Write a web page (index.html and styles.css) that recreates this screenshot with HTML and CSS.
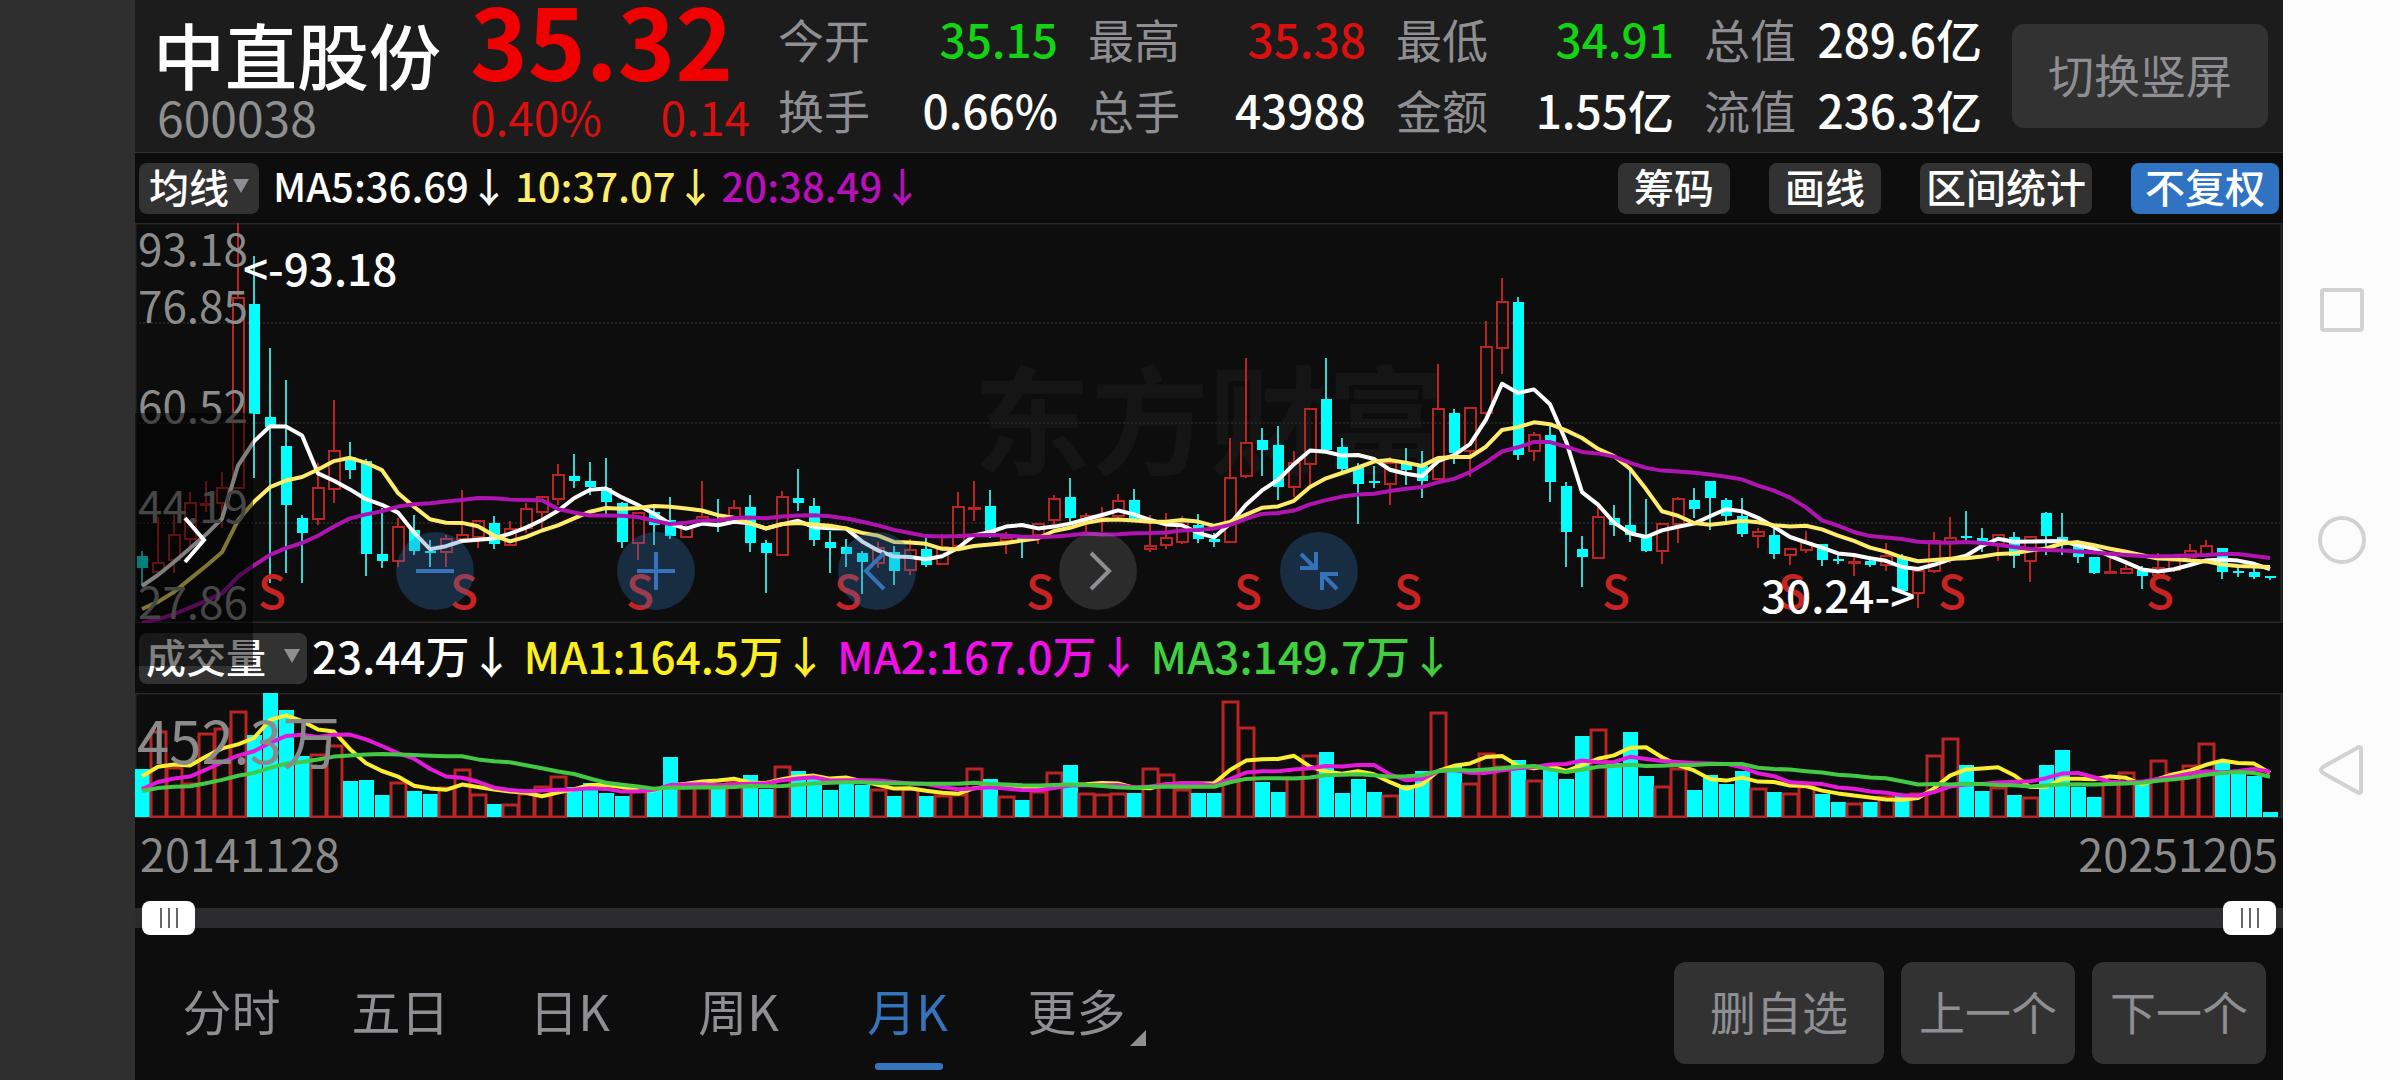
FILE: index.html
```
<!DOCTYPE html>
<html lang="zh-CN">
<head>
    <meta charset="UTF-8">
    <meta name="viewport" content="width=device-width, initial-scale=1.0">
    <title>中直股份 600038</title>
    <link rel="stylesheet" href="styles.css">
</head>
<body>
    <div class="gutter"></div>

    <main class="app">
        <header class="quote">
            <div class="stock">
                <h1>中直股份</h1>
                <span class="code">600038</span>
            </div>
            <div class="price up">
                <strong>35.32</strong>
                <div class="change"><span>0.40%</span><span>0.14</span></div>
            </div>
            <dl class="stats">
                <div><dt>今开</dt><dd class="down">35.15</dd></div>
                <div><dt>最高</dt><dd class="up">35.38</dd></div>
                <div><dt>最低</dt><dd class="down">34.91</dd></div>
                <div><dt>总值</dt><dd>289.6亿</dd></div>
                <div><dt>换手</dt><dd>0.66%</dd></div>
                <div><dt>总手</dt><dd>43988</dd></div>
                <div><dt>金额</dt><dd>1.55亿</dd></div>
                <div><dt>流值</dt><dd>236.3亿</dd></div>
            </dl>
            <button type="button" class="big-btn rotate">切换竖屏</button>
        </header>

        <div class="toolbar">
            <button type="button" class="chip picker">均线<i class="caret"></i></button>
            <div class="legend">
                <span>MA5:36.69↓</span>
                <span class="ma10">10:37.07↓</span>
                <span class="ma20">20:38.49↓</span>
            </div>
            <div class="tools">
                <button type="button" class="chip">筹码</button>
                <button type="button" class="chip">画线</button>
                <button type="button" class="chip wide">区间统计</button>
                <button type="button" class="chip active">不复权</button>
            </div>
        </div>

        <section class="chart">
            <svg class="plot" id="kline" viewBox="0 223 2148 400">
                <text class="watermark" x="1074" y="466">东方财富</text>
                <g class="frame">
                    <path d="M0 223.5H2148M0 622.5H2148M0.5 223V623M2146.5 223V623"/>
                    <path class="dots" d="M0 323H2148M0 423H2148M0 523H2148"/>
                </g>
                <g id="candles"></g>
                <g id="priceLines"></g>
                <g id="marks" class="marks"></g>
                <g class="scale">
                    <text x="3" y="266">93.18</text>
                    <text x="3" y="323">76.85</text>
                    <text x="3" y="423">60.52</text>
                    <text x="3" y="523">44.19</text>
                    <text x="3" y="619">27.86</text>
                </g>
                <g class="callout">
                    <text x="108" y="286">&lt;-93.18</text>
                    <text x="1626" y="613">30.24-&gt;</text>
                </g>
            </svg>
            <div class="controls">
                <button type="button" class="round" aria-label="缩小"><svg viewBox="0 0 78 78"><path d="M20 39H58"/></svg></button>
                <button type="button" class="round" aria-label="放大"><svg viewBox="0 0 78 78"><path d="M20 39H58M39 20V58"/></svg></button>
                <button type="button" class="round" aria-label="左移"><svg viewBox="0 0 78 78"><path d="M46 21L28 39L46 57"/></svg></button>
                <button type="button" class="round off" aria-label="右移"><svg viewBox="0 0 78 78"><path d="M32 21L50 39L32 57"/></svg></button>
                <button type="button" class="round" aria-label="还原"><svg viewBox="0 0 78 78"><path d="M21 22L35 36M20 36H36V20M57 57L43 43M58 42H42V58"/></svg></button>
            </div>
            <button type="button" class="drawer" aria-label="展开"><svg viewBox="0 0 118 253"><path d="M50 105L69 127L50 149"/></svg></button>
        </section>

        <div class="toolbar volume-bar">
            <button type="button" class="chip picker volume">成交量<i class="caret"></i></button>
            <div class="legend">
                <span>23.44万↓</span>
                <span class="v1">MA1:164.5万↓</span>
                <span class="v2">MA2:167.0万↓</span>
                <span class="v3">MA3:149.7万↓</span>
            </div>
        </div>

        <svg class="plot" viewBox="0 0 2148 125">
            <path class="frame" d="M0 .5H2148M0 124.5H2148M.5 0V125M2146.5 0V125"/>
            <g id="bars"></g>
            <g id="volumeLines"></g>
            <text class="max" x="2" y="71">452.3万</text>
        </svg>

        <div class="dates"><span>20141128</span><span>20251205</span></div>

        <div class="range">
            <input type="range" min="0" max="100" value="0" aria-label="开始日期">
            <input type="range" min="0" max="100" value="100" aria-label="结束日期">
        </div>

        <footer class="bottom">
            <nav class="tabs">
                <a href="#">分时</a>
                <a href="#">五日</a>
                <a href="#">日K</a>
                <a href="#">周K</a>
                <a href="#" class="current">月K</a>
                <a href="#" class="more">更多</a>
            </nav>
            <div class="actions">
                <button type="button" class="big-btn remove">删自选</button>
                <button type="button" class="big-btn">上一个</button>
                <button type="button" class="big-btn">下一个</button>
            </div>
        </footer>
    </main>

    <nav class="system">
        <svg viewBox="0 0 50 50"><rect x="5" y="5" width="40" height="40" rx="2"/></svg>
        <svg viewBox="0 0 50 50"><circle cx="25" cy="25" r="22"/></svg>
        <svg viewBox="0 0 50 50"><path d="M44 3V47Q43 49 40 47L6 28Q2 25 6 22L40 3Q43 1 44 3Z"/></svg>
    </nav>

    <script src="chart.js"></script>
</body>
</html>
```
FILE: styles.css
```
* {
    box-sizing: border-box;
}
body {
    margin: 0;
    display: flex;
    min-height: 100vh;
    background: #0d0d0d;
    color: #fff;
    font-family: "Noto Sans CJK SC", sans-serif;
}
button {
    border: none;
    font-family: inherit;
    cursor: pointer;
}
.gutter {
    flex: 0 0 135px;
    background: #2f2f2f;
}
.app {
    flex: 1;
    min-width: 0;
    display: flex;
    flex-direction: column;
}
.up {
    color: #dc0f0f;
}
.down {
    color: #14d214;
}

/* quote header */
.quote {
    display: flex;
    height: 153px;
    padding: 0 15px 0 18px;
    background: #1c1c1c;
    border-bottom: 1px solid #333;
}
.stock {
    width: 317px;
    padding-top: 13px;
}
.stock h1 {
    margin: 0;
    font-size: 72px;
    line-height: 80px;
    font-weight: 500;
}
.code {
    display: block;
    padding-left: 4px;
    font-size: 48px;
    line-height: 46px;
    color: #8f8f8f;
}
.price {
    width: 280px;
}
.price strong {
    display: block;
    height: 94px;
    font-size: 98px;
    line-height: 76px;
    font-weight: 700;
    color: #f00000;
}
.change {
    display: flex;
    justify-content: space-between;
    font-size: 46px;
    line-height: 44px;
}
.stats {
    flex: 1;
    display: grid;
    grid-template-columns: 280px 278px 278px 1fr;
    column-gap: 30px;
    grid-auto-rows: 71px;
    margin: 0 30px 0 28px;
    padding-top: 3px;
    font-size: 46px;
    line-height: 71px;
}
.stats div {
    display: flex;
    justify-content: space-between;
}
.stats dt {
    color: #8e8e93;
}
.stats dd {
    margin: 0;
    font-weight: 500;
}
.big-btn {
    height: 102px;
    padding: 0 18px 6px;
    border-radius: 12px;
    background: #323232;
    color: #8e8e93;
    font-size: 46px;
}
.rotate {
    width: 256px;
    height: 104px;
    margin-top: 24px;
}

/* indicator toolbars */
.toolbar {
    display: flex;
    align-items: center;
    height: 70px;
    padding: 0 4px;
    font-size: 40px;
}
.chip {
    height: 51px;
    padding: 0 16px 4px;
    border-radius: 8px;
    background: #323232;
    color: #fff;
    font-size: 40px;
    line-height: 46px;
    font-weight: 500;
}
.chip.wide {
    padding: 0 6px 4px;
}
.chip.active {
    padding: 0 14px 4px;
    background: #3073c2;
}
.picker {
    display: flex;
    align-items: center;
    gap: 4px;
    padding: 0 10px 4px;
}
.volume {
    gap: 18px;
    padding: 0 7px 4px;
}
.caret {
    border: 8px solid transparent;
    border-top: 14px solid #8e8e93;
    border-bottom: none;
}
.legend {
    display: flex;
    gap: 6px;
    margin-left: 14px;
    padding-bottom: 6px;
    font-weight: 500;
    white-space: nowrap;
}
.tools {
    display: flex;
    gap: 39px;
    margin-left: auto;
}
.volume-bar .legend {
    gap: 10px;
    margin-left: 5px;
    font-size: 44px;
}
.ma10 {
    color: #ffec6a;
}
.ma20 {
    color: #b80fb8;
}
.v1 {
    color: #fcee21;
}
.v2 {
    color: #f10fe6;
}
.v3 {
    color: #3fcf3f;
}

/* charts */
.chart {
    position: relative;
}
.plot {
    display: block;
    width: 100%;
    height: auto;
}
.frame {
    fill: none;
    stroke: #282828;
    stroke-width: 2;
}
.dots {
    stroke: #242424;
    stroke-dasharray: 2 2;
}
.watermark {
    font-size: 118px;
    font-weight: 700;
    text-anchor: middle;
    fill: #151515;
}
.wick-up, .body-up {
    fill: none;
    stroke: #ba2424;
    stroke-width: 2;
}
#bars .body-up {
    stroke-width: 3;
}
.wick-down {
    stroke: #3fd2d2;
    stroke-width: 2;
}
.body-down {
    fill: #00ffff;
}
.line {
    fill: none;
    stroke: currentColor;
    stroke-width: 4;
    stroke-linejoin: round;
    color: #fff;
}
.line.ma10 {
    color: #ffec6a;
}
.line.ma20 {
    color: #b014b0;
}
.line.v1 {
    color: #fcee30;
}
.line.v2 {
    color: #e41ad8;
}
.line.v3 {
    color: #44c944;
}
.marks {
    fill: #c82323;
    font-size: 46px;
    font-weight: 500;
    text-anchor: middle;
}
.scale {
    fill: #8c8c8c;
    font-size: 44px;
}
.callout {
    fill: #fff;
    font-size: 44px;
    font-weight: 500;
}
.max {
    fill: #8a8a8a;
    font-size: 58px;
}
.controls {
    position: absolute;
    left: 261px;
    bottom: 13px;
    display: flex;
    gap: 143px;
}
.round {
    width: 78px;
    height: 78px;
    padding: 0;
    border-radius: 50%;
    background: rgba(50, 115, 190, 0.3);
}
.round svg, .drawer svg {
    display: block;
    width: 100%;
    height: 100%;
    fill: none;
    stroke: #3572b8;
    stroke-width: 4;
}
.round.off {
    background: rgba(150, 150, 150, 0.22);
}
.round.off svg {
    stroke: #8e8e93;
}
.drawer {
    position: absolute;
    left: 0;
    top: 190px;
    width: 118px;
    height: 253px;
    padding: 0;
    background: rgba(0, 0, 0, 0.5);
}
.drawer svg {
    stroke: #fff;
}

/* dates and range */
.dates {
    display: flex;
    justify-content: space-between;
    padding: 0 5px 6px;
    font-size: 45px;
    line-height: 70px;
    color: #8a8a8a;
}
.range {
    position: relative;
    height: 34px;
    margin-top: 7px;
    background: linear-gradient(#2c2c2e, #2c2c2e) center / 100% 20px no-repeat;
}
.range input {
    position: absolute;
    left: 7px;
    width: calc(100% - 14px);
    height: 34px;
    margin: 0;
    appearance: none;
    background: none;
    pointer-events: none;
}
.range input::-webkit-slider-thumb {
    appearance: none;
    width: 53px;
    height: 34px;
    border-radius: 8px;
    background: repeating-linear-gradient(90deg, #666 0 2px, #fff 2px 8px) center / 18px 20px no-repeat, #fff;
    pointer-events: auto;
}

/* bottom bar */
.bottom {
    flex: 1;
    display: flex;
    justify-content: space-between;
    align-items: flex-start;
    padding: 27px 17px 10px 12px;
}
.tabs {
    display: flex;
}
.tabs a {
    position: relative;
    width: 169px;
    color: #8e8e93;
    font-size: 49px;
    line-height: 96px;
    text-align: center;
    text-decoration: none;
}
.tabs .current {
    color: #3573ba;
}
.tabs .current::after {
    content: "";
    position: absolute;
    left: 52px;
    bottom: -12px;
    width: 68px;
    height: 7px;
    border-radius: 3px;
    background: #3573ba;
}
.tabs .more::after {
    content: "";
    position: absolute;
    right: 15px;
    bottom: 12px;
    border-left: 16px solid transparent;
    border-bottom: 16px solid #8e8e93;
}
.actions {
    display: flex;
    gap: 17px;
}
.remove {
    padding: 0 36px 6px;
}

/* phone navigation */
.system {
    flex: 0 0 117px;
    display: flex;
    flex-direction: column;
    align-items: center;
    justify-content: center;
    gap: 180px;
    background: #fcfcfc;
}
.system svg {
    width: 50px;
    height: 50px;
    fill: none;
    stroke: #d2d2d2;
    stroke-width: 4;
}
```
FILE: chart.js
```
// one row per month: [rising, high, body top, body bottom, low], on the plot's y axis
const candles = [
    [0,551,556,568,586],[1,517,563,572,572],[1,515,535,560,573],[1,492,503,539,550],[1,481,504,504,512],
    [1,472,488,503,528],[1,223,298,488,488],[0,256,304,414,478],[0,348,417,427,583],[0,380,446,505,573],
    [0,515,518,533,583],[1,463,488,519,525],[1,400,451,489,503],[0,442,457,470,479],[0,459,461,554,576],
    [0,508,554,561,568],[1,518,527,561,567],[0,515,530,551,555],[0,540,551,553,567],[1,535,539,552,567],
    [1,490,535,539,540],[1,521,521,537,548],[0,516,523,544,549],[1,521,529,545,545],[1,503,509,528,533],
    [1,497,497,512,528],[1,464,475,499,505],[0,454,476,481,488],[0,462,481,487,495],[0,458,488,502,514],
    [0,502,503,542,548],[1,512,513,543,560],[0,507,512,525,545],[0,497,520,536,539],[1,525,527,537,537],
    [1,481,517,520,524],[0,499,519,521,532],[1,500,508,520,522],[0,495,507,543,552],[0,540,543,553,593],
    [1,491,497,555,555],[0,469,498,503,511],[0,498,506,540,546],[0,531,542,548,573],[0,539,547,554,567],
    [0,551,553,562,594],[1,542,548,563,568],[0,546,552,571,585],[1,539,550,570,575],[0,537,549,565,567],
    [1,534,547,564,564],[1,492,507,546,550],[1,481,508,508,521],[0,490,506,533,538],[1,532,538,541,554],
    [0,535,537,539,558],[1,523,524,535,544],[1,495,499,520,525],[0,478,497,518,523],[1,513,516,523,532],
    [1,507,518,518,532],[1,494,501,516,518],[0,489,500,519,519],[1,515,546,549,552],[1,513,538,545,549],
    [1,516,522,542,544],[0,514,525,539,543],[0,533,539,542,547],[1,438,478,542,542],[1,358,443,476,478],
    [0,428,440,450,476],[0,426,445,487,500],[1,451,463,487,497],[1,408,409,464,486],[0,358,399,450,452],
    [0,438,447,469,473],[0,463,467,484,524],[0,466,481,483,488],[1,457,463,484,505],[0,448,463,470,485],
    [0,451,466,481,498],[1,364,409,479,479],[0,409,413,453,464],[1,408,408,451,477],[1,321,347,413,415],
    [1,278,302,348,374],[0,297,302,455,460],[1,432,435,451,461],[0,425,435,482,502],[0,482,486,532,567],
    [0,536,549,557,587],[1,502,517,558,558],[0,505,518,525,536],[0,470,525,535,542],[0,499,535,551,552],
    [1,523,524,551,564],[1,497,499,524,543],[0,488,500,509,518],[0,481,481,498,530],[0,498,500,516,525],
    [0,498,516,534,537],[1,528,532,536,548],[0,529,535,554,559],[1,548,549,555,565],[1,531,543,550,553],
    [0,544,544,560,566],[0,555,559,561,564],[1,557,562,562,576],[0,556,561,565,567],[1,543,556,565,571],
    [0,554,558,591,591],[1,568,571,593,608],[1,532,541,571,573],[1,517,538,543,563],[0,511,536,538,540],
    [0,528,538,542,552],[1,534,535,544,561],[0,532,537,556,568],[1,536,537,561,582],[0,512,513,536,555],
    [0,513,537,541,555],[0,544,546,557,563],[0,557,557,573,574],[1,555,572,572,574],[1,560,569,573,574],
    [0,566,570,576,589],[1,553,568,575,575],[1,559,561,570,572],[1,544,551,557,562],[1,540,546,555,555],
    [0,548,548,572,579],[0,567,571,573,577],[0,567,572,577,579],[0,576,576,578,580]
];

const volumes = [
    48,86,50,34,84,89,106,82,124,107,61,63,72,36,37,22,35,26,23,30,48,23,13,13,24,31,41,30,34,24,
    21,26,28,60,31,32,32,36,42,28,51,46,40,27,34,32,28,21,29,21,22,23,49,38,21,17,26,45,52,24,
    23,24,24,49,43,28,24,24,116,90,35,25,40,62,65,24,38,25,22,32,46,105,51,34,64,51,57,37,47,38,
    81,88,54,85,41,31,49,27,42,33,46,29,25,24,31,23,15,14,15,21,21,24,62,79,52,26,30,22,20,52,
    67,30,20,34,45,34,57,44,52,74,55,45,41,5
];

// months before the first one shown, the averages need them
const closesBefore = [637,637,637,637,637,637,637,637,637,637,634,634,634,633,625,618,600,572,572];
const volumesBefore = [24,24,24,24,24,24,24,24,24,24,15,15,15,15,15,39,39,39,39];

// months marked with an S
const sells = [8, 20, 31, 44, 56, 69, 79, 92, 103, 113, 126];

const STEP = 16;
const BASE = 124;
const xOf = i => 7 + i * STEP;

function add(parent, tag, attrs) {
    const el = document.createElementNS('http://www.w3.org/2000/svg', tag);
    for (const key in attrs) {
        el.setAttribute(key, attrs[key]);
    }
    document.getElementById(parent).appendChild(el);
    return el;
}

function average(before, values, n) {
    const all = before.concat(values);
    return values.map((v, i) => {
        const end = i + before.length + 1;
        return all.slice(end - n, end).reduce((a, b) => a + b, 0) / n;
    });
}

function drawLine(parent, ys, name) {
    const points = ys.map((y, i) => xOf(i) + ',' + y.toFixed(1)).join(' ');
    add(parent, 'polyline', { points: points, class: 'line ' + name });
}

candles.forEach(([up, high, top, bottom, low], i) => {
    const x = xOf(i);
    const kind = up ? 'up' : 'down';
    if (up) {
        add('candles', 'path', { d: `M${x} ${high}V${top}M${x} ${bottom}V${low}`, class: 'wick-up' });
        add('candles', 'rect', { x: x - 5, y: top, width: 11, height: Math.max(bottom - top, 1), class: 'body-up' });
    } else {
        add('candles', 'path', { d: `M${x} ${high}V${low}`, class: 'wick-down' });
        add('candles', 'rect', { x: x - 5, y: top, width: 11, height: bottom - top, class: 'body-down' });
    }

    const h = volumes[i];
    if (up) {
        add('bars', 'rect', { x: x - 7, y: BASE - h + 1, width: 15, height: h - 1, class: 'body-' + kind });
    } else {
        add('bars', 'rect', { x: x - 7, y: BASE - h, width: 15, height: h, class: 'body-' + kind });
    }
});

const closes = candles.map(c => c[0] ? c[2] : c[3]);
drawLine('priceLines', average(closesBefore, closes, 5), 'ma5');
drawLine('priceLines', average(closesBefore, closes, 10), 'ma10');
drawLine('priceLines', average(closesBefore, closes, 20), 'ma20');

const flip = ys => ys.map(v => BASE - v);
drawLine('volumeLines', flip(average(volumesBefore, volumes, 5)), 'v1');
drawLine('volumeLines', flip(average(volumesBefore, volumes, 10)), 'v2');
drawLine('volumeLines', flip(average(volumesBefore, volumes, 20)), 'v3');

sells.forEach(i => {
    add('marks', 'text', { x: xOf(i) + 2, y: 609 }).textContent = 'S';
});
```
